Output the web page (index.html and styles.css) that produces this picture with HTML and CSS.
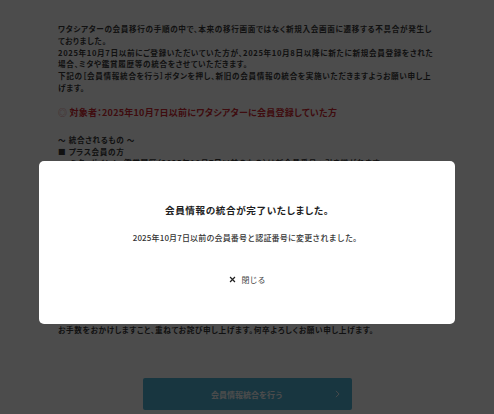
FILE: index.html
```html
<!DOCTYPE html>
<html lang="ja">
<head>
<meta charset="utf-8">
<title>会員情報統合</title>
<link rel="stylesheet" href="styles.css">
</head>
<body>
<main class="page">
  <section class="content">
    <p class="para">ワタシアターの会員移行の手順の中で、本来の移行画面ではなく新規入会画面に遷移する不具合が発生しておりました。</p>
    <p class="para">2025年10月7日以前にご登録いただいていた方が、2025年10月8日以降に新たに新規会員登録をされた場合、ミタや鑑賞履歴等の統合をさせていただきます。</p>
    <p class="para">下記の［会員情報統合を行う］ボタンを押し、新旧の会員情報の統合を実施いただきますようお願い申し上げます。</p>
    <p class="target"><span class="target-mark">◎</span> 対象者：2025年10月7日以前にワタシアターに会員登録していた方</p>
    <p class="para">〜 統合されるもの 〜</p>
    <p class="para">■ プラス会員の方</p>
    <p class="para indent">ミタ・ポイント・鑑賞履歴（2025年10月7日以前のもの）は新会員番号へ引き継がれます。</p>
    <p class="para indent">プラス会員の有効期限は、統合前の会員情報の内容が優先されます。</p>
    <p class="para">■ 一般会員の方</p>
    <p class="para indent">ミタ・鑑賞履歴は新会員番号へ引き継がれます。</p>
    <p class="para apology">お手数をおかけしますこと、重ねてお詫び申し上げます。何卒よろしくお願い申し上げます。</p>
  </section>
  <div class="actions">
    <button class="merge-btn" type="button">
      <span class="merge-label">会員情報統合を行う</span>
      <svg class="merge-chevron" viewBox="0 0 8 12" width="5" height="8"><path d="M1.5 1 L6.5 6 L1.5 11" fill="none" stroke="#fff" stroke-width="1.4"/></svg>
    </button>
  </div>
</main>
<div class="overlay">
  <div class="modal">
    <h2 class="modal-title">会員情報の統合が完了いたしました。</h2>
    <p class="modal-text">2025年10月7日以前の会員番号と認証番号に変更されました。</p>
    <button class="modal-close" type="button">
      <svg class="close-icon" viewBox="0 0 10 10" width="7" height="7"><path d="M1.5 1.5 L8.5 8.5 M8.5 1.5 L1.5 8.5" stroke="#222" stroke-width="1.8" fill="none"/></svg>
      <span>閉じる</span>
    </button>
  </div>
</div>
</body>
</html>
```
FILE: styles.css
```css
* { box-sizing: border-box; }
html, body {
  margin: 0;
  padding: 0;
  background: #fff;
  font-family: "Noto Sans CJK JP", "Noto Sans", sans-serif;
  color: #3a3a3a;
}
.page {
  width: 494px;
  height: 414px;
  overflow: hidden;
  padding-top: 23px;
}
.content {
  width: 378px;
  margin: 0 auto;
}
.para {
  margin: 0;
  font-size: 7.6px;
  line-height: 11.8px;
  font-weight: 700;
  letter-spacing: 0.66px;
  font-feature-settings: "palt";
}
.indent { padding-left: 12px; }
.target {
  margin: 12px 0 14px;
  font-size: 9px;
  line-height: 14px;
  font-weight: 700;
  color: #d22a32;
  letter-spacing: 0.25px;
  font-feature-settings: "palt";
}
.target-mark { color: #e07a80; font-weight: 400; }
.apology { margin-top: 119px; }
.actions {
  display: flex;
  justify-content: center;
  margin-top: 43px;
}
.merge-btn {
  width: 209px;
  height: 32px;
  border: none;
  border-radius: 2px;
  background: #52b4d6;
  color: #fff;
  display: flex;
  align-items: center;
  justify-content: center;
  position: relative;
  font-family: inherit;
  font-size: 8px;
  font-weight: 700;
  padding: 0;
}
.merge-chevron { position: absolute; right: 12px; top: 12px; }
.overlay {
  position: fixed;
  inset: 0;
  background: rgba(0, 0, 0, 0.7);
  padding-top: 161px;
}
.modal {
  width: 416px;
  height: 163px;
  margin: 0 auto;
  background: #fff;
  border-radius: 5px;
  display: flex;
  flex-direction: column;
  align-items: center;
  padding-top: 42px;
}
.modal-title {
  margin: 0;
  font-size: 9.6px;
  line-height: 14px;
  font-weight: 700;
  color: #1e1e1e;
  letter-spacing: 0.6px;
  font-feature-settings: "palt";
}
.modal-text {
  margin: 15px 0 0;
  font-size: 8px;
  line-height: 12px;
  font-weight: 500;
  color: #333;
  letter-spacing: 0.15px;
}
.modal-close {
  margin-top: 30px;
  border: none;
  background: none;
  display: flex;
  align-items: center;
  gap: 6px;
  font-family: inherit;
  font-size: 8px;
  color: #444;
  padding: 0;
}
```
